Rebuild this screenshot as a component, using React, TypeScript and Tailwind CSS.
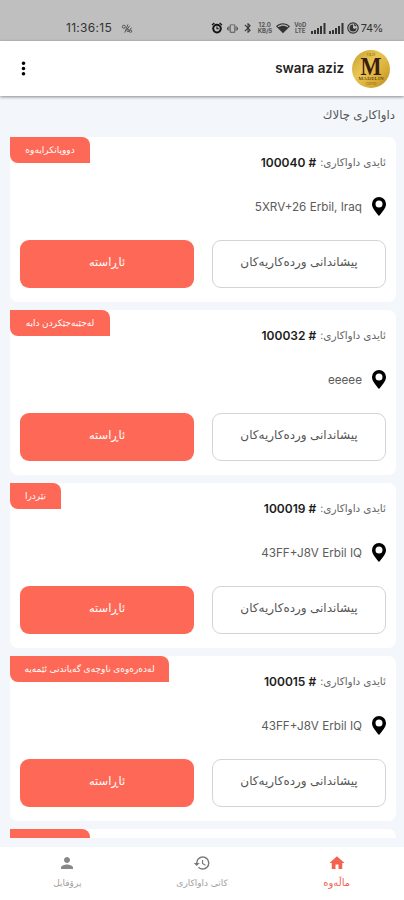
import {
  MdBluetooth,
  MdHistory,
  MdHome,
  MdMoreVert,
  MdNetworkWifi,
  MdPerson,
  MdVibration,
} from 'react-icons/md';

type Order = {
  id: string;
  address: string;
  status: string;
  badgeClass: string;
};

const ORDERS: Order[] = [
  { id: '100040', address: '5XRV+26 Erbil, Iraq', status: 'دووپاتکرایەوە', badgeClass: 'w-20' },
  { id: '100032', address: 'eeeee', status: 'لەجێبەجێکردن دایە', badgeClass: 'w-[100px]' },
  { id: '100019', address: '43FF+J8V Erbil IQ', status: 'نێردرا', badgeClass: 'w-[51px]' },
  {
    id: '100015',
    address: '43FF+J8V Erbil IQ',
    status: 'لەدەرەوەی ناوچەی گەیاندنی ئێمەیە',
    badgeClass: 'w-[159px]',
  },
];

const AlarmIcon = () => (
  <svg viewBox="0 0 12 12" className="h-3 w-3 shrink-0" fill="none" stroke="#111">
    <circle cx="6" cy="6.6" r="3.8" fill="#bfbfbf" strokeWidth="2" />
    <path d="M6 4.6v2.2h1.8" strokeWidth="1.1" />
    <path d="m1 3 2.4-2M11 3 8.6 1" strokeWidth="1.3" />
  </svg>
);

const Signal = () => (
  <svg viewBox="0 0 15 11" className="h-[11px] w-[15px] shrink-0" fill="currentColor">
    <rect x="0" y="8" width="2" height="3" />
    <rect x="3" y="7" width="2" height="4" />
    <rect x="6" y="5" width="2" height="6" />
    <rect x="9" y="3" width="2" height="8" />
    <rect x="12.5" y="0" width="2" height="11" />
  </svg>
);

const PinIcon = () => (
  <svg viewBox="0 0 14 19" className="h-[19px] w-[14px] shrink-0" fill="black">
    <path
      fillRule="evenodd"
      d="M7 0a7 7 0 0 0-7 7c0 4.4 4.2 8.6 7 12 2.8-3.4 7-7.6 7-12a7 7 0 0 0-7-7Zm0 3.5a3.5 3.5 0 1 1 0 7 3.5 3.5 0 0 1 0-7Z"
    />
  </svg>
);

const StatusBar = () => (
  <div
    dir="ltr"
    className="flex h-[41px] shrink-0 items-end justify-between bg-[#bfbfbf] pb-[4px] pl-[66px] pr-[21px] text-[#333]"
  >
    <div className="flex h-[18px] items-center gap-[9px]">
      <span className="text-[12px] tracking-[0.3px]">11:36:15</span>
      <svg viewBox="0 0 12 10" className="h-[9px] w-3" fill="none" stroke="#555" strokeWidth="1.1">
        <circle cx="2.5" cy="3" r="1.7" />
        <path d="M7 .5 3.5 9.5M6 6l3-4M7.5 9l3.5-5" />
        <circle cx="7" cy="7" r="1.3" />
        <circle cx="10" cy="8" r="1.3" />
      </svg>
    </div>
    <div className="flex h-[18px] items-center">
      <span className="mr-1">
        <AlarmIcon />
      </span>
      <MdVibration className="mr-1 size-[11px] text-[#555]" />
      <MdBluetooth className="mr-1 size-3 text-[#333]" />
      <span className="mr-1 w-[14px] text-center text-[6px] font-bold leading-[6px] text-[#555]">
        12.0
        <br />
        KB/S
      </span>
      <MdNetworkWifi className="mr-1 size-[14px]" />
      <span className="mr-1 w-[13px] text-center text-[6px] font-bold leading-[6px] text-[#555]">
        VoD
        <br />
        LTE
      </span>
      <Signal />
      <span className="w-[3px]" />
      <Signal />
      <svg viewBox="0 0 12 12" className="ml-[3px] mr-[2px] size-3" fill="none" stroke="#333">
        <circle cx="6" cy="6" r="5.2" strokeWidth="1.2" />
        <path d="M6 2.5a3.5 3.5 0 1 0 3.5 3.5L7.5 7 6 6Z" fill="#333" stroke="none" />
        <path d="M7 2.5 9 4" strokeWidth="1.2" />
      </svg>
      <span className="text-[11px] tracking-[-0.4px]">74%</span>
    </div>
  </div>
);

const BrandLogo = () => (
  <svg viewBox="0 0 38 38" className="size-[38px]">
    <defs>
      <linearGradient id="gold" x1="0" y1="0" x2="1" y2="1">
        <stop offset="0" stopColor="#c49b2d" />
        <stop offset=".4" stopColor="#e8c654" />
        <stop offset=".7" stopColor="#d9ad35" />
        <stop offset="1" stopColor="#b88a20" />
      </linearGradient>
    </defs>
    <circle cx="19" cy="19" r="19" fill="url(#gold)" />
    <g textAnchor="middle" fontFamily="Liberation Serif, serif" fill="#3a1c12">
      <text x="19" y="6" fontSize="4" fill="#80651c">
        OLD
      </text>
      <text x="19" y="24.5" fontSize="25" fontWeight="bold" textLength="21" lengthAdjust="spacingAndGlyphs">
        M
      </text>
      <text x="19" y="30" fontSize="5" textLength="25">
        MADELIN
      </text>
      <text x="19" y="34.5" fontSize="3" fill="#80651c">
        COFFEE
      </text>
    </g>
  </svg>
);

const OrderCard = ({ order }: { order: Order }) => (
  <div className="relative h-[165px] shrink-0 rounded-lg bg-white px-[10px] pt-[15px]">
    <div
      className={`absolute left-0 top-0 flex h-[26px] items-center justify-center whitespace-nowrap rounded-bl-lg rounded-tr-lg bg-[#fe6957] text-[9px] text-white ${order.badgeClass}`}
    >
      {order.status}
    </div>
    <div className="flex h-[22px] items-center gap-1 text-[10.5px] text-[#666]">
      <span>ئایدی داواکاری:</span>
      <span dir="ltr" className="text-[12px] font-semibold text-[#1c1c1c]">
        {order.id} #
      </span>
    </div>
    <div className="mt-[22px] flex h-[22px] items-center gap-[10px]">
      <PinIcon />
      <span dir="ltr" className="pt-[2px] text-[11.7px] text-[#5c5c5c]">
        {order.address}
      </span>
    </div>
    <div className="mt-[22px] grid grid-cols-2 gap-[18px]">
      <button className="h-12 whitespace-nowrap rounded-[9px] border border-[#d4d4d4] pb-[3px] text-[12px] text-[#555]">
        پیشاندانی وردەکاریەکان
      </button>
      <button className="h-12 rounded-[9px] bg-[#fe6957] pb-[2px] text-[11.5px] text-white">
        ئاڕاستە
      </button>
    </div>
  </div>
);

const App = () => (
  <div
    dir="rtl"
    className="flex h-[900px] w-[404px] flex-col overflow-hidden bg-[#f3f7fb] font-['Inter','DejaVu_Sans',sans-serif]"
  >
    <StatusBar />
    <header className="z-10 flex h-[55px] shrink-0 items-center justify-between bg-white pl-[13px] pr-[14px] shadow-[0_1px_3px_rgba(0,0,0,0.45)]">
      <div className="flex items-center gap-2">
        <BrandLogo />
        <span className="text-[13.4px] font-semibold text-[#222]">swara aziz</span>
      </div>
      <MdMoreVert className="size-[21px] text-black" />
    </header>

    <h2 className="flex h-[40.5px] shrink-0 items-center pr-[9px] text-[11.8px] text-[#555]">
      داواکاری چالاك
    </h2>

    <main className="flex shrink-0 flex-col gap-2 pl-[10px] pr-2">
      {ORDERS.map((order) => (
        <OrderCard key={order.id} order={order} />
      ))}
      {/* top edge of the next card */}
      <div className="h-[9px] rounded-t-lg bg-white">
        <div className="mr-auto h-full w-20 rounded-tr-lg bg-[#fe6957]" />
      </div>
    </main>

    <nav className="mt-auto grid h-[53px] shrink-0 grid-cols-3 bg-white text-[9px] leading-[15px] text-[#a0a0a0]">
      <div className="flex flex-col items-center pt-[7px] text-[#f26450]">
        <MdHome className="size-[18px]" />
        <span className="mt-[3px] text-[10px]">ماڵەوە</span>
      </div>
      <div className="flex flex-col items-center pt-[7px]">
        <MdHistory className="size-[18px] text-[#777]" />
        <span className="mt-[3px]">کاتی داواکاری</span>
      </div>
      <div className="flex flex-col items-center pt-[7px]">
        <MdPerson className="size-[18px] text-[#888]" />
        <span className="mt-[3px]">پرۆفایل</span>
      </div>
    </nav>
  </div>
);

export default App;
